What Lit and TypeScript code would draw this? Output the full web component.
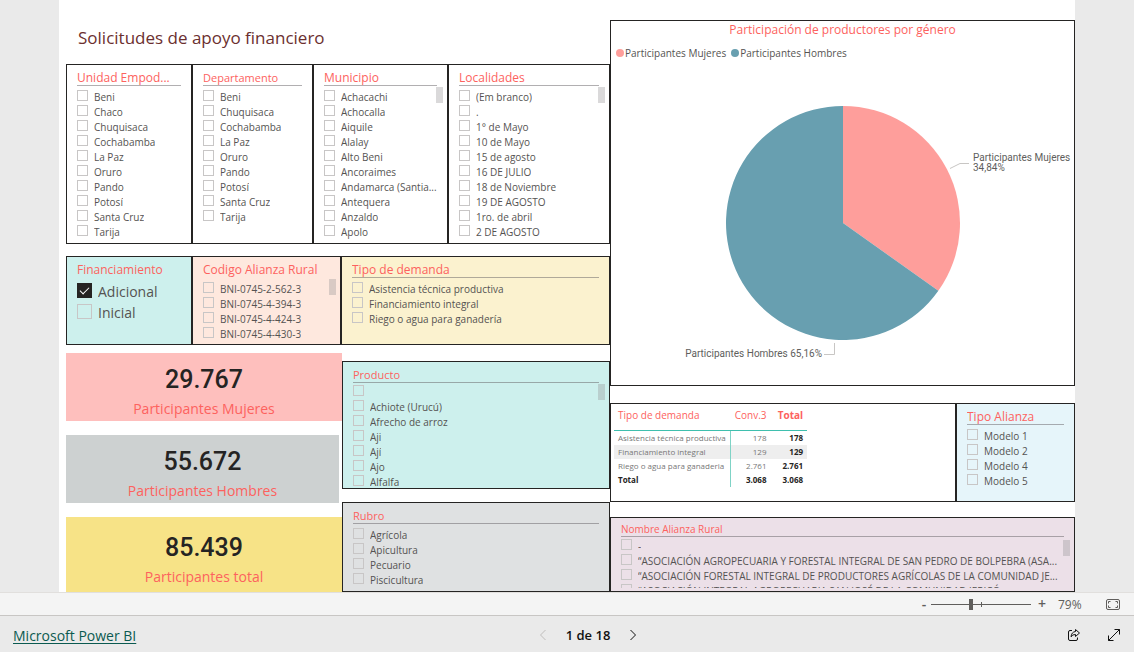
import { LitElement, html, css, svg, nothing } from "lit";
import { customElement, property } from "lit/decorators.js";
import { classMap } from "lit/directives/class-map.js";

interface SlicerItem {
  label: string;
  checked?: boolean;
}

const plain = (...labels: string[]): SlicerItem[] => labels.map((label) => ({ label }));

@customElement("slicer-panel")
export class SlicerPanel extends LitElement {
  static styles = css`
    :host {
      display: flex;
      flex-direction: column;
      position: relative;
      box-sizing: border-box;
      min-width: 0;
      min-height: 0;
      border: 1px solid #252423;
      padding: 5px 10px 1px;
      overflow: hidden;
    }
    .title {
      flex: none;
      margin: 0;
      font-size: 12px;
      line-height: 15px;
      font-weight: 400;
      color: #fd625e;
      white-space: nowrap;
      overflow: hidden;
      text-overflow: ellipsis;
      border-bottom: 1px solid transparent;
    }
    .title.medium {
      font-size: 11px;
    }
    .title.small {
      font-size: 10px;
      line-height: 13px;
    }
    .title.ruled {
      border-bottom-color: rgba(100, 95, 100, 0.5);
    }
    .list {
      list-style: none;
      margin: 3px -6px 0 0;
      padding: 0;
      flex: 1;
      min-height: 0;
      overflow: hidden;
    }
    .list.close {
      margin-top: 1px;
    }
    .item {
      display: flex;
      align-items: center;
      gap: 6px;
      height: 15px;
      font-size: 10px;
      color: #555352;
    }
    .text {
      min-width: 0;
      white-space: nowrap;
      overflow: hidden;
      text-overflow: ellipsis;
    }
    .box {
      appearance: none;
      flex: none;
      box-sizing: border-box;
      width: 11px;
      height: 11px;
      margin: 0 0 2px;
      border: 1px solid #c8c6c6;
    }
    .large .item {
      height: 21px;
      font-size: 14px;
    }
    .large .box {
      width: 15px;
      height: 15px;
      display: grid;
      place-items: center;
    }
    .large .box:checked {
      background: #252423;
      border-color: #252423;
    }
    .large .box:checked::after {
      content: "";
      width: 8px;
      height: 4px;
      border-left: 1px solid #fff;
      border-bottom: 1px solid #fff;
      transform: translateY(-1px) rotate(-45deg);
    }
    .thumb {
      position: absolute;
      top: 22px;
      right: 4px;
      width: 7px;
      height: 16px;
      background: rgba(150, 145, 150, 0.35);
    }
  `;

  @property() heading = "";
  @property() size = "";
  @property({ attribute: false }) items: SlicerItem[] = [];
  @property({ type: Boolean }) ruled = false;
  @property({ type: Boolean }) large = false;
  @property({ type: Boolean }) close = false;
  @property({ type: Boolean }) scroll = false;

  render() {
    const title = {
      title: true,
      ruled: this.ruled,
      medium: this.size === "medium",
      small: this.size === "small",
    };
    return html`
      <h2 class=${classMap(title)}>${this.heading}</h2>
      <ul class=${classMap({ list: true, large: this.large, close: this.close })}>
        ${this.items.map(
          (item, i) => html`<li>
            <label class="item" for="opt${i}">
              <input class="box" type="checkbox" id="opt${i}" ?checked=${item.checked} />
              <span class="text">${item.label}</span>
            </label>
          </li>`
        )}
      </ul>
      ${this.scroll ? html`<span class="thumb"></span>` : nothing}
    `;
  }
}

@customElement("gender-chart")
export class GenderChart extends LitElement {
  static styles = css`
    :host {
      display: flex;
      flex-direction: column;
      box-sizing: border-box;
      border: 1px solid #252423;
    }
    .title {
      margin: 0;
      font-size: 12px;
      line-height: 18px;
      font-weight: 400;
      text-align: center;
      color: #fd625e;
    }
    .legend {
      display: flex;
      gap: 5px;
      margin: 6px 0 0;
      padding: 0 5px;
      list-style: none;
      font-size: 10px;
      line-height: 16px;
      color: #555352;
    }
    .entry {
      display: flex;
      align-items: center;
      gap: 1px;
    }
    .dot {
      width: 8px;
      height: 8px;
      border-radius: 50%;
    }
    .women {
      background: #fe9e9b;
      fill: #fe9e9b;
    }
    .men {
      background: #689fb0;
      fill: #689fb0;
    }
    .plot {
      display: block;
      width: 100%;
      flex: 1;
      min-height: 0;
    }
    .leader {
      fill: none;
      stroke: #c8c6c4;
    }
    .tag {
      font-family: Roboto, sans-serif;
      font-size: 10px;
      fill: #605e5c;
    }
  `;

  private share = 0.3484;

  render() {
    const cx = 232;
    const cy = 162;
    const r = 117;
    const a = this.share * 2 * Math.PI;
    const ex = cx + r * Math.sin(a);
    const ey = cy - r * Math.cos(a);
    return html`
      <h2 class="title">Participación de productores por género</h2>
      <ul class="legend">
        <li class="entry"><span class="dot women"></span>Participantes Mujeres</li>
        <li class="entry"><span class="dot men"></span>Participantes Hombres</li>
      </ul>
      <svg class="plot" viewBox="0 0 463 324" role="img" aria-label="Participación de productores por género">
        ${svg`
          <path class="women" d="M${cx} ${cy} V${cy - r} A${r} ${r} 0 0 1 ${ex} ${ey} Z" />
          <path class="men" d="M${cx} ${cy} L${ex} ${ey} A${r} ${r} 0 1 1 ${cx} ${cy - r} Z" />
          <path class="leader" d="M339 107.500 L349 102.500 H358" />
          <path class="leader" d="M223.500 282 V293.500 H213" />
          <text class="tag" x="362" y="100">Participantes Mujeres</text>
          <text class="tag" x="362" y="110">34,84%</text>
          <text class="tag" x="211" y="296" text-anchor="end">Participantes Hombres 65,16%</text>
        `}
      </svg>
    `;
  }
}

@customElement("app-root")
export class AppRoot extends LitElement {
  static styles = css`
    :host {
      display: flex;
      flex-direction: column;
      height: 100vh;
      overflow: hidden;
      font-family: "Open Sans", "Noto Sans", sans-serif;
      background: #eaeaea;
      color: #252423;
    }
    .stage {
      flex: 1;
      min-height: 0;
      display: flex;
      padding: 0 59px;
    }
    .page {
      flex: 1;
      min-width: 0;
      display: grid;
      grid-template-columns: 544fr 465fr;
      padding-left: 7px;
      background: #fff;
      overflow: hidden;
    }
    .left,
    .right {
      display: flex;
      flex-direction: column;
      min-width: 0;
      min-height: 0;
    }
    .heading {
      margin: 24px 0 12px 12px;
      font-size: 17px;
      line-height: 28px;
      font-weight: 400;
      color: #6b2f2f;
      white-space: nowrap;
    }
    .places {
      display: grid;
      grid-template-columns: 126fr 121fr 135fr 162fr;
      min-height: 180px;
    }
    .filters {
      display: grid;
      grid-template-columns: 126fr 149fr 269fr;
      min-height: 89px;
      margin-top: 12px;
    }
    .lower {
      flex: 1;
      min-height: 0;
      display: grid;
      grid-template-columns: 276fr 268fr;
      margin-top: 8px;
    }
    .cards,
    .stack {
      display: flex;
      flex-direction: column;
      min-height: 0;
      min-width: 0;
    }
    .cards {
      gap: 14px;
    }
    .stack {
      gap: 13px;
      padding-top: 8px;
    }
    .card {
      padding-top: 10px;
      text-align: center;
    }
    .card:last-child {
      flex: 1;
      padding-top: 14px;
    }
    .value {
      margin: 0;
      font-family: Roboto, sans-serif;
      font-size: 25px;
      font-weight: 500;
      line-height: 34px;
    }
    .caption {
      margin: 0;
      font-size: 14px;
      line-height: 24px;
      color: #fd625e;
    }
    .rose { background: #febfbd; }
    .slate { background: #cdd1d1; margin-right: 3px; }
    .gold { background: #f7e387; }
    .mint { background: #cdf0ed; }
    .peach { background: #fee8de; }
    .cream { background: #fbf2cf; }
    .ash { background: #dfe1e2; }
    .sky { background: #e6f5fa; }
    .mauve { background: #ece0e8; padding-bottom: 3px; }
    .product { height: 128px; }
    .fill { flex: 1; }
    gender-chart {
      height: 366px;
      margin-top: 20px;
      flex: none;
    }
    .summary {
      display: grid;
      grid-template-columns: 346fr 119fr;
      min-height: 99px;
      margin: 17px 0 15px;
    }
    .matrix {
      border: 1px solid #252423;
      padding: 1px 3px;
    }
    .table {
      border-collapse: separate;
      border-spacing: 0;
      font-size: 8px;
      line-height: 14px;
      color: #777;
    }
    .table th,
    .table td {
      padding: 0 4px;
      text-align: right;
      white-space: nowrap;
      font-weight: 400;
    }
    .table td {
      padding-left: 12px;
    }
    .table tbody th {
      border-right: 1px solid #7fd3c6;
    }
    .table th:first-child {
      text-align: left;
    }
    .table thead th {
      padding-bottom: 5px;
      line-height: 20px;
      font-size: 10px;
      color: #fd625e;
      border-bottom: 1px solid #3fbfae;
    }
    .table .strong,
    .table thead .strong {
      font-weight: 700;
    }
    .table tbody .strong {
      color: #252423;
    }
    .table .band {
      background: #eee;
    }
    .zoombar {
      display: flex;
      align-items: center;
      justify-content: flex-end;
      box-sizing: border-box;
      height: 24px;
      padding-right: 14px;
      background: #f4f4f4;
      border-top: 1px solid #e1dfdd;
      border-bottom: 1px solid #c8c6c4;
      color: #605e5c;
      font-size: 12px;
    }
    .btn {
      display: grid;
      place-items: center;
      padding: 0;
      border: 0;
      background: none;
      color: inherit;
      font: inherit;
    }
    .step {
      width: 8px;
      font-size: 14px;
      font-weight: 600;
      line-height: 16px;
    }
    .range {
      appearance: none;
      width: 100px;
      height: 11px;
      margin: 0 7px 0 3px;
      background:
        linear-gradient(#605e5c, #605e5c) 50px 50% / 1px 5px no-repeat,
        linear-gradient(#605e5c, #605e5c) 0 50% / 100% 1px no-repeat;
    }
    .range::-webkit-slider-thumb {
      appearance: none;
      width: 4px;
      height: 11px;
      background: #605e5c;
    }
    .percent {
      width: 26px;
      margin: 0 22px 0 12px;
    }
    .footer {
      display: grid;
      grid-template-columns: 1fr auto 1fr;
      align-items: center;
      height: 34px;
      padding: 2px 13px 0;
    }
    .brand {
      justify-self: start;
      font-size: 14px;
      color: #0b5a50;
      text-underline-offset: 2px;
    }
    .pager {
      display: flex;
      align-items: center;
      gap: 19px;
      margin-left: 42px;
      font-size: 13px;
      font-weight: 600;
      color: #111;
    }
    .actions {
      display: flex;
      gap: 26px;
      justify-self: end;
      color: #111;
    }
    .icon {
      display: block;
      fill: none;
      stroke: currentColor;
    }
    .off {
      color: #c0bebc;
    }
  `;

  private unidad = plain("Beni", "Chaco", "Chuquisaca", "Cochabamba", "La Paz", "Oruro", "Pando", "Potosí", "Santa Cruz", "Tarija");
  private departamento = plain("Beni", "Chuquisaca", "Cochabamba", "La Paz", "Oruro", "Pando", "Potosí", "Santa Cruz", "Tarija");
  private municipio = plain("Achacachi", "Achocalla", "Aiquile", "Alalay", "Alto Beni", "Ancoraimes", "Andamarca (Santia...", "Antequera", "Anzaldo", "Apolo");
  private localidades = plain("(Em branco)", ".", "1° de Mayo", "10 de Mayo", "15 de agosto", "16 DE JULIO", "18 de Noviembre", "19 DE AGOSTO", "1ro. de abril", "2 DE AGOSTO");
  private financiamiento: SlicerItem[] = [{ label: "Adicional", checked: true }, { label: "Inicial" }];
  private codigo = plain("BNI-0745-2-562-3", "BNI-0745-4-394-3", "BNI-0745-4-424-3", "BNI-0745-4-430-3");
  private demanda = plain("Asistencia técnica productiva", "Financiamiento integral", "Riego o agua para ganadería");
  private producto = plain("", "Achiote (Urucú)", "Afrecho de arroz", "Aji", "Ají", "Ajo", "Alfalfa");
  private rubro = plain("Agrícola", "Apicultura", "Pecuario", "Piscicultura");
  private modelos = plain("Modelo 1", "Modelo 2", "Modelo 4", "Modelo 5");
  private alianzas = plain(
    "-",
    "“ASOCIACIÓN AGROPECUARIA Y FORESTAL INTEGRAL DE SAN PEDRO DE BOLPEBRA (ASA...",
    "“ASOCIACIÓN FORESTAL INTEGRAL DE PRODUCTORES AGRÍCOLAS DE LA COMUNIDAD JE...",
    "“ASOCIACIÓN INTEGRAL AGROPECUARIA SAN JOSÉ DE LA COMUNIDAD JERICÓ"
  );
  private cards = [
    { value: "29.767", caption: "Participantes Mujeres", tone: "rose" },
    { value: "55.672", caption: "Participantes Hombres", tone: "slate" },
    { value: "85.439", caption: "Participantes total", tone: "gold" },
  ];
  private rows = [
    ["Asistencia técnica productiva", "178", "178"],
    ["Financiamiento integral", "129", "129"],
    ["Riego o agua para ganaderia", "2.761", "2.761"],
    ["Total", "3.068", "3.068"],
  ];

  render() {
    return html`
      <main class="stage">
        <div class="page">
          <section class="left">
            <h1 class="heading">Solicitudes de apoyo financiero</h1>
            <div class="places">
              <slicer-panel heading="Unidad Empod..." ruled .items=${this.unidad}></slicer-panel>
              <slicer-panel heading="Departamento" size="medium" ruled .items=${this.departamento}></slicer-panel>
              <slicer-panel heading="Municipio" ruled scroll .items=${this.municipio}></slicer-panel>
              <slicer-panel heading="Localidades" ruled scroll .items=${this.localidades}></slicer-panel>
            </div>
            <div class="filters">
              <slicer-panel class="mint" heading="Financiamiento" large .items=${this.financiamiento}></slicer-panel>
              <slicer-panel class="peach" heading="Codigo Alianza Rural" scroll .items=${this.codigo}></slicer-panel>
              <slicer-panel class="cream" heading="Tipo de demanda" ruled .items=${this.demanda}></slicer-panel>
            </div>
            <div class="lower">
              <div class="cards">
                ${this.cards.map(
                  (c) => html`<article class="card ${c.tone}">
                    <p class="value">${c.value}</p>
                    <p class="caption">${c.caption}</p>
                  </article>`
                )}
              </div>
              <div class="stack">
                <slicer-panel class="mint product" heading="Producto" size="medium" ruled close scroll .items=${this.producto}></slicer-panel>
                <slicer-panel class="ash fill" heading="Rubro" size="medium" ruled .items=${this.rubro}></slicer-panel>
              </div>
            </div>
          </section>
          <section class="right">
            <gender-chart></gender-chart>
            <div class="summary">
              <div class="matrix">
                <table class="table">
                  <thead>
                    <tr>
                      <th scope="col">Tipo de demanda</th>
                      <th scope="col">Conv.3</th>
                      <th scope="col" class="strong">Total</th>
                    </tr>
                  </thead>
                  <tbody>
                    ${this.rows.map(([name, conv, total], i) => {
                      const last = i === this.rows.length - 1;
                      return html`<tr class=${classMap({ band: i === 1 })}>
                        <th scope="row" class=${classMap({ strong: last })}>${name}</th>
                        <td class=${classMap({ strong: last })}>${conv}</td>
                        <td class="strong">${total}</td>
                      </tr>`;
                    })}
                  </tbody>
                </table>
              </div>
              <slicer-panel class="sky" heading="Tipo Alianza" ruled .items=${this.modelos}></slicer-panel>
            </div>
            <slicer-panel class="mauve fill" heading="Nombre Alianza Rural" size="small" ruled close scroll .items=${this.alianzas}></slicer-panel>
          </section>
        </div>
      </main>
      <div class="zoombar">
        <button class="btn step" aria-label="Alejar">-</button>
        <input class="range" type="range" min="0" max="200" value="79" aria-label="Zoom" />
        <button class="btn step" aria-label="Acercar">+</button>
        <span class="percent">79%</span>
        <button class="btn" aria-label="Ajustar a la página">
          <svg class="icon" width="14" height="11" viewBox="0 0 14 11">
            <rect x="0.5" y="0.5" width="13" height="10" rx="1.500" />
            <path d="M2.500 4.500V2.500H4.500M9.500 2.500H11.500V4.500M11.500 6.500V8.500H9.500M4.500 8.500H2.500V6.500" />
          </svg>
        </button>
      </div>
      <footer class="footer">
        <a class="brand" href="#">Microsoft Power BI</a>
        <nav class="pager">
          <button class="btn off" aria-label="Página anterior" disabled>
            <svg class="icon" width="8" height="12" viewBox="0 0 8 12"><path d="M6.500 1L1.500 6L6.500 11" /></svg>
          </button>
          <span>1 de 18</span>
          <button class="btn" aria-label="Página siguiente">
            <svg class="icon" width="8" height="12" viewBox="0 0 8 12"><path d="M1.500 1L6.500 6L1.500 11" /></svg>
          </button>
        </nav>
        <div class="actions">
          <button class="btn" aria-label="Compartir">
            <svg class="icon" width="14" height="14" viewBox="0 0 14 14">
              <path d="M5 2.500H3Q1.500 2.500 1.500 4V11Q1.500 12.500 3 12.500H9Q10.500 12.500 10.500 11V9.500" />
              <path d="M8.500 1.500L12.500 5L8.500 8.500V6.500Q5.500 6.300 4 8.800Q4.500 4 8.500 3.500Z" />
            </svg>
          </button>
          <button class="btn" aria-label="Pantalla completa">
            <svg class="icon" width="14" height="14" viewBox="0 0 14 14">
              <path d="M1.500 12.500L12.500 1.500M7.500 1.500H12.500V6.500M1.500 7.500V12.500H6.500" />
            </svg>
          </button>
        </div>
      </footer>
    `;
  }
}
